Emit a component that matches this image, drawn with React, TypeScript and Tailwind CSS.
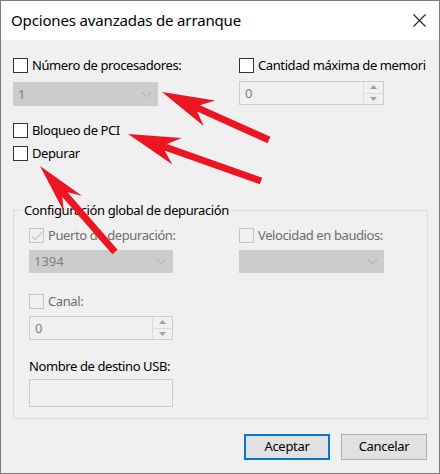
import React from "react";

const font = { fontFamily: '"Noto Sans", "Open Sans", sans-serif' };

function Box({ disabled, checked, white }: { disabled?: boolean; checked?: boolean; white?: boolean }) {
  return (
    <span
      className={`relative flex h-[15px] w-[15px] shrink-0 items-center justify-center border ${
        disabled ? "border-[#c4c4c4]" : "border-[#333333]"
      } ${white || !disabled ? "bg-white" : "bg-[#f0f0f0]"}`}
    >
      {checked && (
        <svg width="12" height="10" viewBox="0 0 12 10" fill="none">
          <path d="M1 5.2 L4.3 8.4 L11 1.5" stroke="#c4c4c4" strokeWidth="1.3" />
        </svg>
      )}
    </span>
  );
}

function Check({ label, disabled, checked }: { label: string; disabled?: boolean; checked?: boolean }) {
  return (
    <div className="flex h-[15px] items-center gap-[4px]">
      <Box disabled={disabled} checked={checked} />
      <span className={`text-[13px] leading-none tracking-[-0.4px] whitespace-nowrap ${disabled ? "text-[#6d6d6d]" : "text-black"}`}>{label}</span>
    </div>
  );
}

function Chevron() {
  return (
    <svg width="11" height="7" viewBox="0 0 11 7" fill="none">
      <path d="M0.5 0.8 L5.5 5.8 L10.5 0.8" stroke="#a8a8a8" strokeWidth="1" />
    </svg>
  );
}

function Select({ value, w, h }: { value: string; w: string; h: string }) {
  return (
    <div className={`flex ${w} ${h} items-center justify-between bg-[#cccccc] pl-[5px] pr-[6px]`}>
      <span className="text-[13px] leading-none text-[#7f7f7f]">{value}</span>
      <Chevron />
    </div>
  );
}

function Spin({ value, w }: { value: string; w: string }) {
  return (
    <div className={`flex ${w} h-[24px] border border-[#cccccc] bg-[#f0f0f0]`}>
      <div className="flex flex-1 items-center pl-[5px] text-[13px] leading-none text-[#7f7f7f]">{value}</div>
      <div className="flex w-[20px] flex-col border-l border-[#dcdcdc]">
        <div className="flex flex-1 items-center justify-center border-b border-[#dcdcdc]">
          <svg width="7" height="4" viewBox="0 0 7 4"><path d="M0 4 L3.5 0 L7 4 Z" fill="#a0a0a0" /></svg>
        </div>
        <div className="flex flex-1 items-center justify-center">
          <svg width="7" height="4" viewBox="0 0 7 4"><path d="M0 0 L3.5 4 L7 0 Z" fill="#a0a0a0" /></svg>
        </div>
      </div>
    </div>
  );
}

function arrowPts(tx: number, ty: number, ex: number, ey: number, hl = 52, hw = 14, sw = 7, notch = 12) {
  const dx = ex - tx, dy = ey - ty;
  const len = Math.hypot(dx, dy);
  const ux = dx / len, uy = dy / len;
  const nx = -uy, ny = ux;
  const bx = tx + ux * hl, by = ty + uy * hl;
  const kx = tx + ux * (hl - notch), ky = ty + uy * (hl - notch);
  const p = [
    [tx, ty],
    [bx + nx * hw, by + ny * hw],
    [kx + (nx * sw) / 2, ky + (ny * sw) / 2],
    [ex + (nx * sw) / 2, ey + (ny * sw) / 2],
    [ex - (nx * sw) / 2, ey - (ny * sw) / 2],
    [kx - (nx * sw) / 2, ky - (ny * sw) / 2],
    [bx - nx * hw, by - ny * hw],
  ];
  return p.map((q) => q.map((v) => v.toFixed(1)).join(",")).join(" ");
}

export default function App() {
  return (
    <div style={font} className="relative h-[474px] w-[440px] overflow-hidden border border-[#7a7a7a] bg-[#f0f0f0]">
      <div className="flex h-[39px] items-center justify-between bg-white pl-[10px] pr-[13px]">
        <span className="text-[15px] tracking-[-0.15px] text-black">Opciones avanzadas de arranque</span>
        <svg width="13" height="13" viewBox="0 0 13 13" fill="none">
          <path d="M0.5 0.5 L12.5 12.5 M12.5 0.5 L0.5 12.5" stroke="#222" strokeWidth="1.1" />
        </svg>
      </div>

      <div className="flex flex-col px-[12px] pt-[18px]">
        <div className="grid grid-cols-[226px_1fr]">
          <div className="flex flex-col gap-[9px]">
            <Check label="Número de procesadores:" />
            <Select value="1" w="w-[145px]" h="h-[24px]" />
          </div>
          <div className="flex flex-col gap-[8px]">
            <Check label="Cantidad máxima de memori" />
            <Spin value="0" w="w-[145px]" />
          </div>
        </div>

        <div className="mt-[17px] flex flex-col gap-[8px]">
          <Check label="Bloqueo de PCI" />
          <Check label="Depurar" />
        </div>

        <div className="relative mt-[49px] h-[209px] w-[415px] border border-[#dcdcdc] pl-[15px] pt-[17px]">
          <span className="absolute left-[8px] top-[-10px] bg-[#f0f0f0] px-[2px] text-[13px] leading-[18px] tracking-[-0.4px] text-black">
            Configuración global de depuración
          </span>
          <div className="grid grid-cols-[210px_1fr]">
            <div className="flex flex-col gap-[7px]">
              <Check label="Puerto de depuración:" disabled checked />
              <Select value="1394" w="w-[144px]" h="h-[23px]" />
            </div>
            <div className="flex flex-col gap-[7px]">
              <Check label="Velocidad en baudios:" disabled />
              <Select value="" w="w-[145px]" h="h-[23px]" />
            </div>
          </div>
          <div className="mt-[21px] flex flex-col gap-[7px]">
            <Check label="Canal:" disabled />
            <Spin value="0" w="w-[144px]" />
          </div>
          <div className="mt-[17px] text-[13px] leading-[18px] tracking-[-0.4px] text-black">Nombre de destino USB:</div>
          <div className="mt-[4px] h-[28px] w-[144px] border border-[#cccccc] bg-[#f0f0f0]" />
        </div>

        <div className="mt-[15px] flex justify-end gap-[11px]">
          <button className="h-[26px] w-[86px] border-2 border-[#0078d7] bg-[#e1e1e1] text-[13px] tracking-[-0.3px] text-black">Aceptar</button>
          <button className="h-[26px] w-[86px] border border-[#adadad] bg-[#e1e1e1] text-[13px] tracking-[-0.3px] text-black">Cancelar</button>
        </div>
      </div>

      <svg className="pointer-events-none absolute left-[-1px] top-[-1px]" width="440" height="474" viewBox="0 0 440 474">
        <polygon points={arrowPts(162, 92, 269, 140)} fill="#ee1522" />
        <polygon points={arrowPts(128, 134, 261, 181)} fill="#ee1522" />
        <polygon points={arrowPts(40, 166, 115, 252, 50, 12)} fill="#ee1522" />
      </svg>
    </div>
  );
}
